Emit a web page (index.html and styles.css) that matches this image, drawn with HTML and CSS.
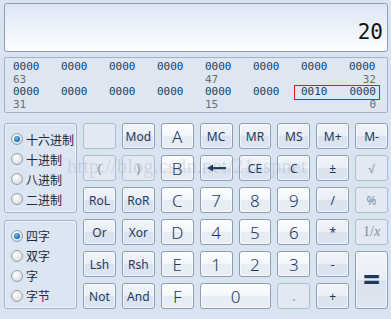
FILE: index.html
```html
<!DOCTYPE html>
<html lang="zh-CN">
<head>
    <meta charset="UTF-8">
    <meta name="viewport" content="width=device-width, initial-scale=1.0">
    <title>计算器</title>
    <link rel="stylesheet" href="styles.css">
</head>
<body>

    <div class="calc">
        <div class="display"><span class="display-value">20</span></div>

        <div class="bits">
            <div class="bit-row">
                <span>0000</span><span>0000</span><span>0000</span><span>0000</span>
                <span>0000</span><span>0000</span><span>0000</span><span>0000</span>
            </div>
            <div class="bit-row bit-labels">
                <span>63</span><span class="c5">47</span><span class="c8">32</span>
            </div>
            <div class="bit-row">
                <span>0000</span><span>0000</span><span>0000</span><span>0000</span>
                <span>0000</span><span>0000</span>
                <span class="mark"><span>0010</span><span>0000</span></span>
            </div>
            <div class="bit-row bit-labels">
                <span>31</span><span class="c5">15</span><span class="c8">0</span>
            </div>
        </div>

        <div class="pad">
            <div class="side">
                <div class="radio-group">
                    <label class="radio checked"><i></i>十六进制</label>
                    <label class="radio"><i></i>十进制</label>
                    <label class="radio"><i></i>八进制</label>
                    <label class="radio"><i></i>二进制</label>
                </div>
                <div class="radio-group">
                    <label class="radio checked"><i></i>四字</label>
                    <label class="radio"><i></i>双字</label>
                    <label class="radio"><i></i>字</label>
                    <label class="radio"><i></i>字节</label>
                </div>
            </div>

            <div class="keys">
                <button class="key off"></button>
                <button class="key">Mod</button>
                <button class="key num">A</button>
                <button class="key">MC</button>
                <button class="key">MR</button>
                <button class="key">MS</button>
                <button class="key">M+</button>
                <button class="key">M-</button>

                <button class="key off">(</button>
                <button class="key off">)</button>
                <button class="key num">B</button>
                <button class="key">
                    <svg width="19" height="8" viewBox="0 0 19 8"><path d="M0 4 L6 0.5 L6 7.5 Z" fill="#1e395b"/><rect x="5" y="3" width="14" height="2.2" fill="#1e395b"/></svg>
                </button>
                <button class="key">CE</button>
                <button class="key">C</button>
                <button class="key">±</button>
                <button class="key off">√</button>

                <button class="key">RoL</button>
                <button class="key">RoR</button>
                <button class="key num">C</button>
                <button class="key num">7</button>
                <button class="key num">8</button>
                <button class="key num">9</button>
                <button class="key">/</button>
                <button class="key off">%</button>

                <button class="key">Or</button>
                <button class="key">Xor</button>
                <button class="key num">D</button>
                <button class="key num">4</button>
                <button class="key num">5</button>
                <button class="key num">6</button>
                <button class="key">*</button>
                <button class="key off inv">1/<i>x</i></button>

                <button class="key">Lsh</button>
                <button class="key">Rsh</button>
                <button class="key num">E</button>
                <button class="key num">1</button>
                <button class="key num">2</button>
                <button class="key num">3</button>
                <button class="key">-</button>
                <button class="key equals">=</button>

                <button class="key">Not</button>
                <button class="key">And</button>
                <button class="key num">F</button>
                <button class="key num zero">0</button>
                <button class="key off">.</button>
                <button class="key">+</button>
            </div>
        </div>

        <div class="watermark">http://blog.csdn.net/21aspnet</div>
    </div>

</body>
</html>
```

FILE: styles.css
```css
body {
    margin: 0;
    background-color: #d9e4f1;
    font-family: 'Noto Sans', 'Liberation Sans', sans-serif;
}

.calc {
    position: relative;
    width: 391px;
    height: 319px;
    box-sizing: border-box;
    padding: 3px 3px 10px 4px;
    display: flex;
    flex-direction: column;
    overflow: hidden;
}

/* display */

.display {
    height: 49px;
    box-sizing: border-box;
    border: 1px solid #8d9db2;
    border-radius: 3px;
    background: linear-gradient(#dce6f4, #eef3fa 55%, #fdfeff);
    display: flex;
    justify-content: flex-end;
    align-items: flex-end;
    padding: 0 4px 7px 0;
}

.display-value {
    font-family: 'DejaVu Sans Mono', 'Liberation Mono', monospace;
    font-size: 21px;
    line-height: 24px;
    color: #111;
}

/* bit panel */

.bits {
    margin-top: 5px;
    height: 56px;
    box-sizing: border-box;
    border: 1px solid #a3b1c3;
    border-radius: 2px;
    background: #dde6f1;
    padding: 3px 0 0 8px;
    font-family: 'DejaVu Sans Mono', 'Liberation Mono', monospace;
    font-size: 11px;
    line-height: 12.5px;
    color: #1f3d66;
}

.bit-row {
    display: grid;
    grid-template-columns: repeat(8, 27px);
    column-gap: 21px;
}

.bit-labels {
    color: #6e6e6e;
}

.bit-labels .c5 {
    grid-column: 5;
}

.bit-labels .c8 {
    grid-column: 8;
    text-align: right;
}

.mark {
    grid-column: 7 / span 2;
    display: flex;
    justify-content: space-between;
    border: 1px solid #e3161b;
    margin: -1px -4px -1px -7px;
    padding: 0 3px 0 6px;
}

/* lower part */

.pad {
    margin-top: 10px;
    display: flex;
    gap: 6px;
    height: 186px;
}

.side {
    width: 73px;
    display: flex;
    flex-direction: column;
    gap: 7px;
}

.radio-group {
    flex: 1;
    box-sizing: border-box;
    border: 1px solid #a4b2c4;
    border-radius: 3px;
    box-shadow: inset 0 0 0 1px rgba(255, 255, 255, 0.55);
    background: #dce6f2;
    padding: 5px 0 0 6px;
    display: flex;
    flex-direction: column;
}

.radio {
    height: 20px;
    display: flex;
    align-items: center;
    gap: 3px;
    white-space: nowrap;
    font-family: 'Noto Sans CJK SC', 'Noto Sans', sans-serif;
    font-size: 12px;
    color: #1d2a3a;
}

.radio i {
    flex: none;
    width: 12px;
    height: 12px;
    box-sizing: border-box;
    border-radius: 50%;
    border: 1px solid #9a9ea4;
    background: radial-gradient(circle at 40% 35%, #ffffff, #e2e5e9 60%, #c9ced5);
    display: flex;
    align-items: center;
    justify-content: center;
}

.radio.checked i::after {
    content: '';
    width: 6px;
    height: 6px;
    border-radius: 50%;
    background: radial-gradient(circle at 40% 35%, #6fc0f2, #1a74bf 60%, #0d3f78);
}

/* keys */

.keys {
    flex: 1;
    display: grid;
    grid-template-columns: repeat(8, 1fr);
    grid-template-rows: repeat(6, 26px);
    gap: 6px;
}

.key {
    margin: 0;
    padding: 0;
    border: 1px solid #8e9db1;
    border-radius: 3px;
    box-shadow: inset 0 0 0 1px rgba(255, 255, 255, 0.6);
    background: linear-gradient(#f2f5fa, #e8eef6 50%, #d9e2ee 51%, #dde5f0);
    color: #1e395b;
    font-family: 'Noto Sans', 'Liberation Sans', sans-serif;
    font-size: 12px;
    display: flex;
    align-items: center;
    justify-content: center;
}

.key.num {
    background: linear-gradient(#fdfeff, #f3f6fb 50%, #e6ecf4 51%, #eaeff6);
    font-size: 17px;
    font-weight: 300;
    color: #1e395b;
}

.key.off {
    background: #e2e9f2;
    border-color: #b0bccc;
    box-shadow: none;
    color: #7d8ba0;
}

.key.inv {
    font-family: 'Liberation Serif', serif;
    font-size: 14px;
}

.key.zero {
    grid-column: span 2;
}

.key.equals {
    grid-row: span 2;
    font-size: 30px;
    font-weight: bold;
    color: #1e395b;
    padding-bottom: 4px;
}

/* watermark over the keys */

.watermark {
    position: absolute;
    left: 67px;
    top: 155px;
    font-family: 'Liberation Serif', serif;
    font-size: 20px;
    color: rgba(120, 135, 155, 0.22);
    pointer-events: none;
    letter-spacing: 0.3px;
}
```
